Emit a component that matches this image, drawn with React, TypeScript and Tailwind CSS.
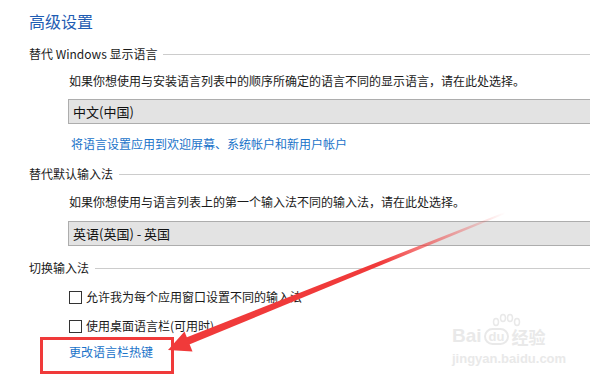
const font = { fontFamily: '"Noto Sans CJK SC", "Noto Sans", sans-serif' };
const latin = { fontFamily: '"Liberation Sans", sans-serif' };

const SectionHeader = ({ label }: { label: string }) => (
  <div className="flex items-center h-[18px] pl-[29px]">
    <span className="text-[12px] leading-[18px] text-[#1a1a1a] whitespace-nowrap">{label}</span>
    <div className="flex-1 h-px bg-[#cccccc] ml-[6px]" />
  </div>
);

const Dropdown = ({ value }: { value: string }) => (
  <div className="ml-[68px] h-[25px] border border-[#adadad] border-r-0 bg-[#e3e3e3] flex items-center pl-[4px]">
    <span className="text-[13px] leading-none text-[#111]">{value}</span>
  </div>
);

const CheckRow = ({ label }: { label: string }) => (
  <div className="flex items-center h-[18px] pl-[69px]">
    <div className="w-[13px] h-[13px] border border-[#333] bg-white" />
    <span className="ml-[4px] text-[12px] leading-[18px] text-[#1a1a1a]">{label}</span>
  </div>
);

export default function App() {
  return (
    <div className="relative w-[590px] h-[379px] bg-white overflow-hidden" style={font}>
      <div className="flex flex-col pt-[10px]">
        <h1 className="pl-[29px] text-[16px] leading-[22px] text-[#1f5db3]">高级设置</h1>

        <div className="mt-[13px]">
          <SectionHeader label="替代 Windows 显示语言" />
        </div>
        <p className="mt-[9px] pl-[69px] text-[12px] leading-[18px] text-[#1a1a1a]">
          如果你想使用与安装语言列表中的顺序所确定的语言不同的显示语言，请在此处选择。
        </p>
        <div className="mt-[9px]">
          <Dropdown value="中文(中国)" />
        </div>
        <a className="mt-[11px] pl-[71px] text-[12px] leading-[18px] text-[#1a73c9]">
          将语言设置应用到欢迎屏幕、系统帐户和新用户帐户
        </a>

        <div className="mt-[12px]">
          <SectionHeader label="替代默认输入法" />
        </div>
        <p className="mt-[10px] pl-[69px] text-[12px] leading-[18px] text-[#1a1a1a]">
          如果你想使用与语言列表上的第一个输入法不同的输入法，请在此处选择。
        </p>
        <div className="mt-[10px]">
          <Dropdown value="英语(英国) - 英国" />
        </div>

        <div className="mt-[13px]">
          <SectionHeader label="切换输入法" />
        </div>
        <div className="mt-[11px]">
          <CheckRow label="允许我为每个应用窗口设置不同的输入法" />
        </div>
        <div className="mt-[11px]">
          <CheckRow label="使用桌面语言栏(可用时)" />
        </div>
        <a className="mt-[8px] pl-[69px] text-[12px] leading-[18px] text-[#1a73c9]">更改语言栏热键</a>
      </div>

      {/* annotation box */}
      <div className="absolute left-[40px] top-[337px] w-[134px] h-[37px] border-[3px] border-[#f03a3a]" />

      {/* annotation arrow */}
      <svg className="absolute left-0 top-0" width="590" height="379" viewBox="0 0 590 379">
        <defs>
          <linearGradient id="fade" x1="505" y1="212" x2="380" y2="265" gradientUnits="userSpaceOnUse">
            <stop offset="0" stopColor="#f03a3a" stopOpacity="0" />
            <stop offset="1" stopColor="#f03a3a" stopOpacity="1" />
          </linearGradient>
        </defs>
        <polygon points="505,212 506,213.5 188,345 185,338" fill="url(#fade)" />
        <polygon points="168,350 184.5,331.5 192.5,351.5" fill="#f03a3a" />
        {/* watermark paw */}
        <g fill="none" stroke="#e9e9e9" strokeWidth="1.5">
          <ellipse cx="496" cy="322" rx="2.5" ry="3.5" />
          <ellipse cx="503" cy="318" rx="2.5" ry="3.5" />
          <ellipse cx="510" cy="318" rx="2.5" ry="3.5" />
          <ellipse cx="517" cy="322" rx="2.5" ry="3.5" />
        </g>
      </svg>

      {/* watermark */}
      <div className="absolute left-[452px] top-[326px] flex flex-col items-start text-[#e9e9e9] select-none">
        <div className="flex items-end leading-none">
          <span className="text-[19px] font-bold" style={latin}>Bai</span>
          <span className="text-[13px] font-bold ml-[2px] px-[3px] rounded-full border-2 border-[#e9e9e9]" style={latin}>du</span>
          <span className="text-[17px] font-bold ml-[2px]">经验</span>
        </div>
        <span className="text-[13px] leading-[15px] mt-[6px] font-bold" style={latin}>jingyan.baidu.com</span>
      </div>
    </div>
  );
}
